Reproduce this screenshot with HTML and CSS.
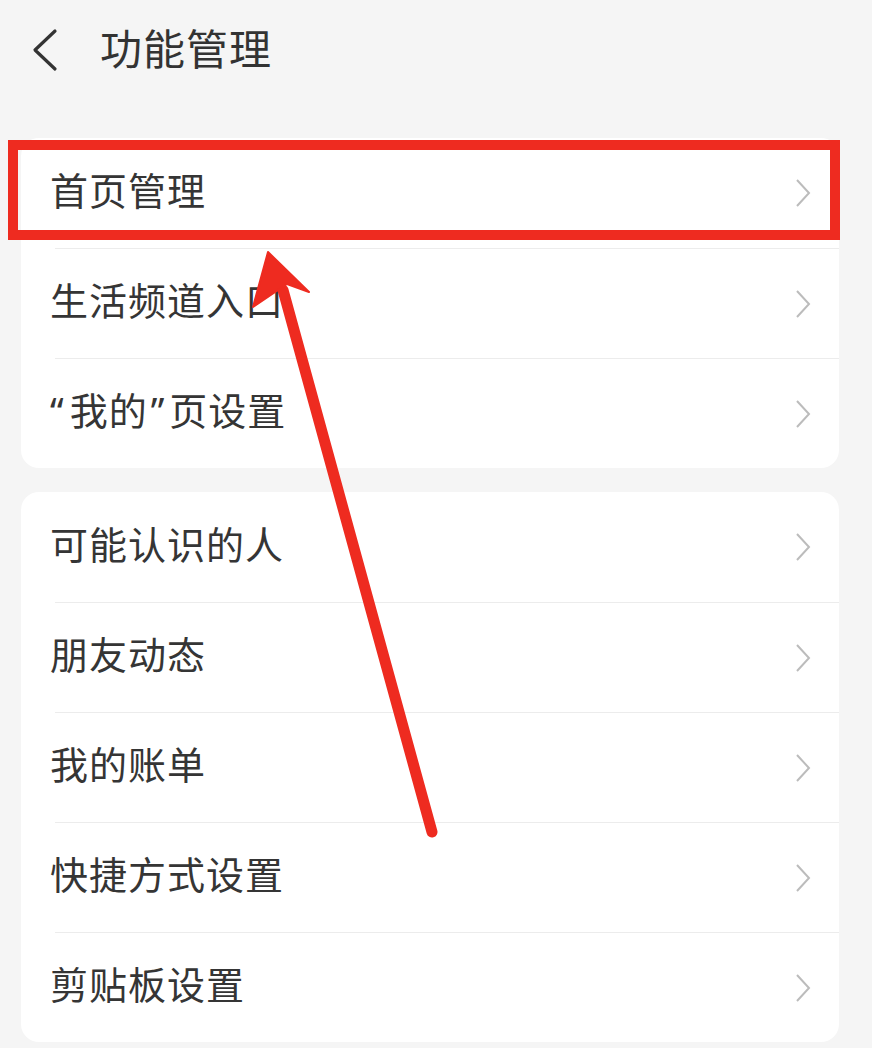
FILE: index.html
```html
<!DOCTYPE html>
<html lang="zh-CN">
<head>
<meta charset="utf-8">
<link rel="stylesheet" href="styles.css">
</head>
<body>
<div class="page">
  <header class="header">
    <svg class="back" width="28" height="44" viewBox="0 0 28 44"><polyline points="24,3 4,22 24,41" fill="none" stroke="#333" stroke-width="3.2" stroke-linecap="round" stroke-linejoin="round"/></svg>
    <h1 class="title">功能管理</h1>
  </header>

  <section class="card card-first">
    <div class="row"><span class="label">首页管理</span><svg class="chev" width="16" height="30" viewBox="0 0 16 30"><polyline points="2,2 14,15 2,28" fill="none" stroke="#bcbcbc" stroke-width="2"/></svg></div>
    <div class="sep"></div>
    <div class="row"><span class="label">生活频道入口</span><svg class="chev" width="16" height="30" viewBox="0 0 16 30"><polyline points="2,2 14,15 2,28" fill="none" stroke="#bcbcbc" stroke-width="2"/></svg></div>
    <div class="sep"></div>
    <div class="row"><span class="label"><span class="q-open">“</span>我的<span class="q-close">”</span>页设置</span><svg class="chev" width="16" height="30" viewBox="0 0 16 30"><polyline points="2,2 14,15 2,28" fill="none" stroke="#bcbcbc" stroke-width="2"/></svg></div>
  </section>

  <section class="card card-second">
    <div class="row"><span class="label">可能认识的人</span><svg class="chev" width="16" height="30" viewBox="0 0 16 30"><polyline points="2,2 14,15 2,28" fill="none" stroke="#bcbcbc" stroke-width="2"/></svg></div>
    <div class="sep"></div>
    <div class="row"><span class="label">朋友动态</span><svg class="chev" width="16" height="30" viewBox="0 0 16 30"><polyline points="2,2 14,15 2,28" fill="none" stroke="#bcbcbc" stroke-width="2"/></svg></div>
    <div class="sep"></div>
    <div class="row"><span class="label">我的账单</span><svg class="chev" width="16" height="30" viewBox="0 0 16 30"><polyline points="2,2 14,15 2,28" fill="none" stroke="#bcbcbc" stroke-width="2"/></svg></div>
    <div class="sep"></div>
    <div class="row"><span class="label">快捷方式设置</span><svg class="chev" width="16" height="30" viewBox="0 0 16 30"><polyline points="2,2 14,15 2,28" fill="none" stroke="#bcbcbc" stroke-width="2"/></svg></div>
    <div class="sep"></div>
    <div class="row"><span class="label">剪贴板设置</span><svg class="chev" width="16" height="30" viewBox="0 0 16 30"><polyline points="2,2 14,15 2,28" fill="none" stroke="#bcbcbc" stroke-width="2"/></svg></div>
  </section>

  <svg class="annot" width="872" height="1048" viewBox="0 0 872 1048">
    <rect x="13" y="145" width="822" height="90" fill="none" stroke="#ee2b20" stroke-width="10"/>
    <line x1="283" y1="290" x2="432" y2="832" stroke="#ee2b20" stroke-width="11" stroke-linecap="round"/>
    <polygon points="268,252 309,292 287,284 253,307" fill="#ee2b20" stroke="#ee2b20" stroke-width="2" stroke-linejoin="round"/>
  </svg>
</div>
</body>
</html>
```

FILE: styles.css
```css
* { box-sizing: border-box; }
html, body {
  margin: 0;
  padding: 0;
  background: #f5f5f5;
}
body {
  font-family: "Noto Sans", "Noto Sans CJK SC", sans-serif;
  color: #333;
}
.page {
  position: relative;
  width: 872px;
  height: 1048px;
  overflow: hidden;
}
.header {
  height: 100px;
  display: flex;
  align-items: center;
  padding-left: 31px;
  padding-bottom: 3px;
}
.back {
  display: block;
  margin-top: 2px;
}
.title {
  margin: 0 0 0 41px;
  font-size: 42px;
  font-weight: 400;
  color: #333;
  line-height: 1;
  letter-spacing: 1px;
}
.card {
  margin-left: 21px;
  width: 818px;
  background: #fff;
  border-radius: 18px;
}
.card-first {
  margin-top: 38px;
}
.card-second {
  margin-top: 24px;
}
.row {
  height: 109px;
  display: flex;
  align-items: center;
  justify-content: space-between;
  padding-left: 29px;
  padding-right: 28px;
}
.row:first-child { height: 110px; }
.label {
  font-size: 38px;
  color: #353535;
  line-height: 1;
  letter-spacing: 1px;
  margin-bottom: 7px;
}
.q-open {
  margin-right: 5px;
}
.q-close {
  margin-left: 3px;
  margin-right: 4px;
}
.chev {
  display: block;
}
.sep {
  height: 1px;
  margin-left: 34px;
  background: #ececec;
}
.annot {
  position: absolute;
  top: 0;
  left: 0;
  pointer-events: none;
}
```
